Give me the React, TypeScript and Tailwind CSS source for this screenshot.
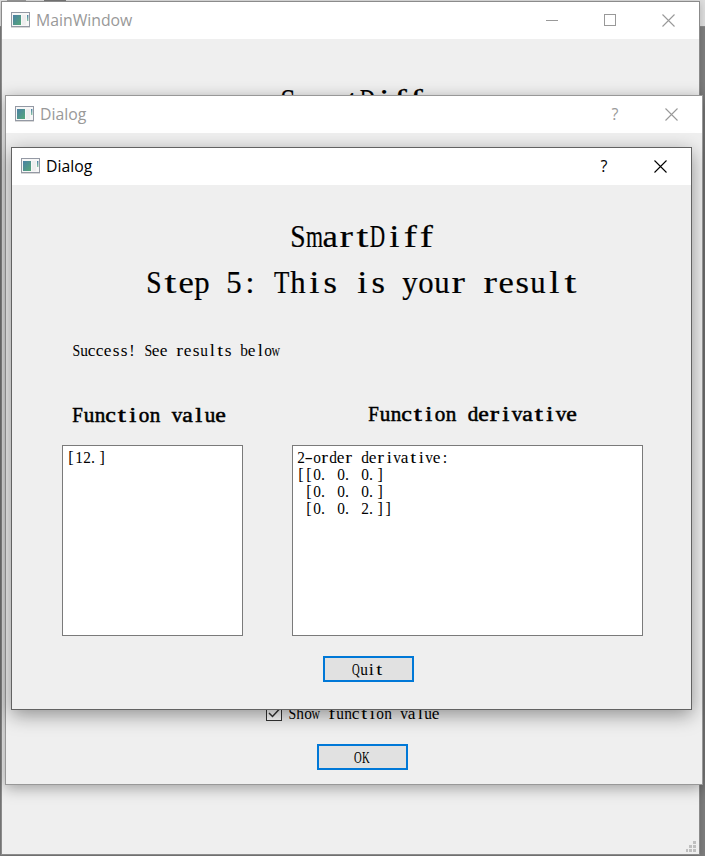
import React from "react";

/* Advance widths of the serif face, in thousandths of an em. */
const WIDTHS: Record<string, number> = {
  a: 444, b: 500, c: 444, d: 500, e: 444, f: 333, g: 500, h: 500, i: 278, l: 278,
  m: 778, n: 500, o: 500, p: 500, r: 333, s: 389, t: 278, u: 500, v: 500, w: 722,
  y: 500, S: 556, D: 722, T: 611, F: 556, Q: 722, O: 722, K: 722, "!": 333,
  ".": 250, ":": 278, "-": 333, "[": 333, "]": 333,
};

const NARROW = "!.:[] ";

function fillOf(ch: string) {
  if ("il".includes(ch)) return 0.64;
  if (ch === "t") return 0.74;
  if (ch === "f") return 0.82;
  if ("rs".includes(ch)) return 0.84;
  if (ch === "-") return 1.05;
  if ("mw".includes(ch)) return 1.06;
  return 0.96;
}

/* Text set on a fixed pitch: every glyph is fitted to a cell of the same width. */
function Mono({ text, pitch, size, className = "" }: { text: string; pitch: number; size: number; className?: string }) {
  return (
    <span className={`inline-block whitespace-pre align-top font-['Liberation_Serif',serif] ${className}`} style={{ fontSize: size }}>
      {Array.from(text).map((ch, i) => {
        const w = ((WIDTHS[ch] ?? 500) * size) / 1000;
        const scale = NARROW.includes(ch) ? 1 : (pitch * fillOf(ch)) / w;
        const shift = ch === "." ? 0 : ch === "]" ? 0.5 : (pitch - w) / 2;
        return (
          <span key={i} className="inline-block" style={{ width: pitch }}>
            <span className="inline-block" style={{ width: w, marginLeft: shift, marginRight: pitch - w - shift, transform: `scaleX(${scale})` }}>{ch}</span>
          </span>
        );
      })}
    </span>
  );
}

function AppIcon() {
  return (
    <svg width="19" height="16" viewBox="0 0 19 16" className="shrink-0">
      <defs>
        <linearGradient id="pane" x1="0" y1="0" x2="1" y2="1">
          <stop offset="0" stopColor="#4a7fa5" />
          <stop offset="1" stopColor="#55a878" />
        </linearGradient>
        <linearGradient id="sliver" x1="0" y1="0" x2="0" y2="1">
          <stop offset="0" stopColor="#4a7fa5" />
          <stop offset="1" stopColor="#8cc8a4" />
        </linearGradient>
      </defs>
      <rect x="0.5" y="0.5" width="18" height="14" fill="#f7f7f7" stroke="#9499a4" />
      <path d="M0 15.5H19" stroke="#d8d8d8" />
      <rect x="2" y="3" width="8" height="10" fill="url(#pane)" />
      <rect x="11" y="3" width="4" height="10" fill="#eeeeee" />
      <rect x="16" y="3" width="1.4" height="6" fill="url(#sliver)" />
    </svg>
  );
}

function Close() {
  return (
    <svg width="13" height="13" viewBox="0 0 13 13" stroke="currentColor" strokeWidth="1.1">
      <path d="M.5 .5L12.5 12.5M12.5 .5L.5 12.5" />
    </svg>
  );
}

function TitleBar({ title, muted, children }: { title: string; muted?: boolean; children: React.ReactNode }) {
  return (
    <div className={`flex h-[37px] shrink-0 items-center bg-white pb-px pl-[9px] ${muted ? "text-[#999]" : "text-black"}`}>
      <AppIcon />
      <span className="ml-1.5 font-['Open_Sans',sans-serif] text-[15.8px] leading-[22px]">{title}</span>
      <div className="ml-auto flex items-center">{children}</div>
    </div>
  );
}

function Help() {
  return <span className="mr-[43px] w-[14px] text-center font-['Open_Sans',sans-serif] text-[16px] leading-[22px]">?</span>;
}

function PushButton({ label }: { label: string }) {
  return (
    <button className="flex h-[26px] w-[91px] items-center justify-center border-2 border-[#0078d7] bg-[#e1e1e1] leading-[18px]">
      <Mono text={label} pitch={8} size={16} className="relative top-px right-[1px]" />
    </button>
  );
}

export default function App() {
  return (
    <div className="relative h-[856px] w-[705px] overflow-hidden bg-[#7f7f7f] text-black">
      <div className="h-[27px] border-b border-[#8a8a8a] bg-[#dedede]">
        <div className="flex h-[2px] gap-[18px] pl-[7px]">
          <span className="w-[19px] bg-[#999]" />
          <span className="w-[22px] bg-[#777]" />
        </div>
      </div>

      <div className="absolute top-px left-px flex h-[854px] w-[699px] flex-col border border-[#8b8b8b] bg-[#efefef] shadow-[0_2px_8px_rgba(0,0,0,0.2)]">
        <TitleBar title="MainWindow" muted>
          <span className="mr-[46px] h-px w-3 bg-[#999]" />
          <span className="mr-[46px] size-3 border border-[#999]" />
          <span className="mr-[24px]"><Close /></span>
        </TitleBar>
        <div className="h-[79px] pt-[43px] pl-[278px] leading-[36px]">
          <Mono text="SmartDiff" pitch={16} size={32} className="[-webkit-text-stroke:0.2px]" />
        </div>
        <svg width="11" height="11" className="mt-auto mr-0.5 mb-0.5 ml-auto" fill="#bfbfbf">
          <path d="M7 0h3v3h-3zM3 4h3v3h-3zM7 4h3v3h-3zM0 8h2v3h-2zM3 8h3v3h-3zM7 8h3v3h-3z" />
        </svg>
      </div>

      <div className="absolute top-[95px] left-[5px] flex h-[690px] w-[698px] flex-col border border-[#989898] bg-[#efefef] shadow-[0_3px_14px_rgba(0,0,0,0.34)]">
        <TitleBar title="Dialog" muted>
          <Help />
          <span className="mr-[24px]"><Close /></span>
        </TitleBar>
        <div className="mt-[571px] flex h-[18px] items-center gap-1.5 pl-[260px]">
          <svg width="16" height="16" viewBox="0 0 16 16" fill="none">
            <rect x="0.5" y="0.5" width="15" height="15" fill="#fff" stroke="#333" />
            <path d="M3 8l3.5 3.5L13 4.5" stroke="#333" strokeWidth="1.5" />
          </svg>
          <Mono text="Show function value" pitch={8} size={16} className="mt-0.5 leading-[18px]" />
        </div>
        <div className="mt-[22px] pl-[311px]"><PushButton label="OK" /></div>
      </div>

      <div className="absolute top-[147px] left-[11px] flex h-[563px] w-[681px] flex-col border border-[#626262] bg-[#efefef] shadow-[0_5px_18px_rgba(0,0,0,0.4)]">
        <TitleBar title="Dialog">
          <Help />
          <span className="mr-[24px]"><Close /></span>
        </TitleBar>
        <h1 className="mt-[33px] h-[36px] pl-[278px] leading-[36px]"><Mono text="SmartDiff" pitch={16} size={32} className="[-webkit-text-stroke:0.2px]" /></h1>
        <h2 className="mt-[10px] h-[36px] pl-[134px] leading-[36px]"><Mono text="Step 5: This is your result" pitch={16} size={32} className="[-webkit-text-stroke:0.2px]" /></h2>
        <p className="mt-[42px] h-[18px] pl-[60px] leading-[18px]"><Mono text="Success! See results below" pitch={8} size={16} /></p>
        <div className="mt-[42px] flex h-[25px] pl-[60px] leading-[24px]">
          <div className="w-[296px] pt-px"><Mono text="Function value" pitch={11} size={20} className="[-webkit-text-stroke:0.5px]" /></div>
          <Mono text="Function derivative" pitch={11} size={20} className="[-webkit-text-stroke:0.5px]" />
        </div>
        <div className="mt-[18px] flex gap-[49px] pl-[50px] leading-[17px]">
          <div className="h-[191px] w-[181px] border border-[#7a7a7a] bg-white pt-[3px] pl-1"><Mono text="[12.]" pitch={8} size={16} /></div>
          <div className="flex h-[191px] w-[351px] flex-col border border-[#7a7a7a] bg-white pt-[3px] pl-1">
            <Mono text="2-order derivative:" pitch={8} size={16} />
            <Mono text="[[0. 0. 0.]" pitch={8} size={16} />
            <Mono text=" [0. 0. 0.]" pitch={8} size={16} />
            <Mono text=" [0. 0. 2.]]" pitch={8} size={16} />
          </div>
        </div>
        <div className="mt-5 pl-[311px]"><PushButton label="Quit" /></div>
      </div>
    </div>
  );
}
